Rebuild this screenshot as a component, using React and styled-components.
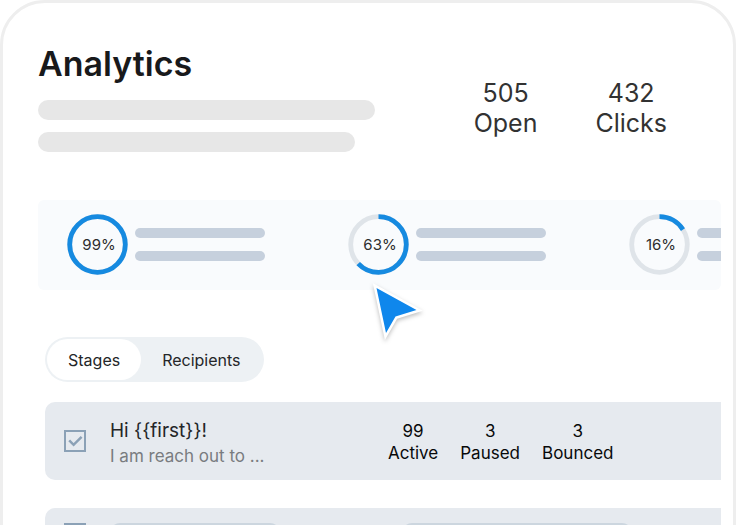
import React from "react";
import styled, { createGlobalStyle } from "styled-components";

const GlobalStyle = createGlobalStyle`
  *, *::before, *::after { box-sizing: border-box; }
  body {
    margin: 0;
    background: #fff;
    font-family: Inter, "Liberation Sans", sans-serif;
    color: #323232;
  }
`;

const Viewport = styled.div`
  height: 100vh;
  overflow: hidden;
  padding-right: 1px;
`;

const Card = styled.main`
  min-height: 120vh;
  padding: 38px 12px 32px 35px;
  border: 3px solid #eeeeee;
  border-radius: 45px;
  background: #fff;
`;

const Header = styled.header`
  display: flex;
  justify-content: space-between;
  align-items: flex-start;
`;

const Intro = styled.div`
  display: flex;
  flex-direction: column;
  gap: 12px;
`;

const Title = styled.h1`
  margin: 0 0 1px;
  font-size: 34px;
  line-height: 46px;
  font-weight: 600;
  color: #18191b;
`;

const Bar = styled.div`
  flex: none;
  width: ${(p) => p.$width}px;
  height: ${(p) => p.$height}px;
  border-radius: 10px;
  background: ${(p) => p.$color};
`;

const Totals = styled.dl`
  display: flex;
  gap: 58px;
  margin: 37px 54px 0 0;
`;

const Total = styled.div`
  display: flex;
  flex-direction: column-reverse;
  text-align: center;
  font-size: 25px;
  line-height: 30px;
`;

const Term = styled.dt`
  margin: 0;
`;

const Value = styled.dd`
  margin: 0;
`;

const Metrics = styled.section`
  display: flex;
  gap: 83px;
  margin-top: 48px;
  padding: 14px 0 15px 29px;
  overflow: hidden;
  border-radius: 6px;
  background: #f9fbfd;
`;

const Metric = styled.div`
  display: flex;
  flex: none;
  align-items: center;
  gap: 7px;
`;

const Gauge = styled.div`
  display: grid;
  place-items: center;
  width: 61px;
  height: 61px;

  > * { grid-area: 1 / 1; }
`;

const Percent = styled.span`
  padding-left: 3px;
  font-size: 15px;
  line-height: 20px;
  color: #2d2d2d;
`;

const BarPair = styled.div`
  display: flex;
  flex-direction: column;
  gap: 13px;
`;

const Tabs = styled.div`
  display: inline-flex;
  margin: 47px 0 0 7px;
  padding: 2px;
  border-radius: 23px;
  background: #edf1f4;
`;

const Tab = styled.button`
  height: 41px;
  padding: 0 21px;
  border: 0;
  border-radius: 21px;
  background: ${(p) => (p.$active ? "#fff" : "transparent")};
  font: 400 16px/20px Inter, "Liberation Sans", sans-serif;
  color: #242628;
`;

const Stages = styled.div`
  display: flex;
  flex-direction: column;
  gap: 28px;
  margin: 20px 0 0 7px;
`;

const Stage = styled.article`
  display: grid;
  grid-template-columns: 22px 279px 1fr;
  align-items: ${(p) => (p.$loading ? "start" : "center")};
  min-height: 78px;
  padding: ${(p) => (p.$loading ? "15px 19px" : "0 19px")};
  border-radius: 10px 0 0 10px;
  background: #e6eaef;
`;

const CheckBox = styled.label`
  display: grid;
  width: 22px;
  height: 22px;

  > * { grid-area: 1 / 1; }
`;

const CheckInput = styled.input`
  appearance: none;
  width: 22px;
  height: 22px;
  margin: 0;
  border: 2px solid #8ba1b6;
  background: transparent;
`;

const CheckMark = styled.svg`
  pointer-events: none;
`;

const Message = styled.div`
  padding: 2px 0 0 24px;
`;

const Subject = styled.h2`
  margin: 0;
  font-size: 19px;
  line-height: 27px;
  font-weight: 400;
  color: #242628;
`;

const Preview = styled.p`
  margin: 0;
  font-size: 17px;
  line-height: 24px;
  color: #797c80;
`;

const Counts = styled.dl`
  display: flex;
  gap: 22px;
  margin: 0;
  padding: 2px 0 0 23px;
`;

const Count = styled.div`
  display: flex;
  flex-direction: column-reverse;
  text-align: center;
  font-size: 17px;
  line-height: 22px;
  color: #08090a;
`;

const LoadingCell = styled.div`
  padding-left: ${(p) => p.$inset}px;
`;

const Pointer = styled.svg`
  position: absolute;
  top: 278px;
  left: 366px;
  overflow: visible;
  pointer-events: none;
  filter: drop-shadow(0 2px 2px rgba(0, 0, 0, 0.25));
`;

const metrics = [99, 63, 16];
const totals = [["505", "Open"], ["432", "Clicks"]];
const counts = [["99", "Active"], ["3", "Paused"], ["3", "Bounced"]];

function Ring({ value }) {
  return (
    <svg width="61" height="61" viewBox="0 0 61 61" fill="none" strokeWidth="4.8" aria-hidden="true">
      <circle cx="30.5" cy="30.5" r="27.8" stroke="#dfe4e9" />
      <circle
        cx="30.5"
        cy="30.5"
        r="27.8"
        stroke="#168ae0"
        pathLength="100"
        strokeDasharray={value === 99 ? "100 0" : `${value} 100`}
        transform="rotate(-90 30.5 30.5)"
      />
    </svg>
  );
}

function Check({ label }) {
  return (
    <CheckBox>
      <CheckInput type="checkbox" defaultChecked aria-label={label} />
      <CheckMark width="22" height="22" viewBox="0 0 22 22" fill="none" aria-hidden="true">
        <path d="M5.2 10.4l4.4 4.4L17.6 6.8" stroke="#8ba1b6" strokeWidth="2.5" />
      </CheckMark>
    </CheckBox>
  );
}

export default function App() {
  const [tab, setTab] = React.useState("Stages");
  return (
    <Viewport>
      <GlobalStyle />
      <Card>
        <Header>
          <Intro>
            <Title>Analytics</Title>
            <Bar $width={337} $height={20} $color="#e7e7e7" />
            <Bar $width={317} $height={20} $color="#e7e7e7" />
          </Intro>
          <Totals>
            {totals.map(([value, label]) => (
              <Total key={label}>
                <Term>{label}</Term>
                <Value>{value}</Value>
              </Total>
            ))}
          </Totals>
        </Header>

        <Metrics>
          {metrics.map((value) => (
            <Metric key={value}>
              <Gauge>
                <Ring value={value} />
                <Percent>{value}%</Percent>
              </Gauge>
              <BarPair>
                <Bar $width={130} $height={10} $color="#c6d0dd" />
                <Bar $width={130} $height={10} $color="#c6d0dd" />
              </BarPair>
            </Metric>
          ))}
        </Metrics>

        <Tabs role="tablist">
          {["Stages", "Recipients"].map((name) => (
            <Tab
              key={name}
              type="button"
              role="tab"
              aria-selected={tab === name}
              $active={tab === name}
              onClick={() => setTab(name)}
            >
              {name}
            </Tab>
          ))}
        </Tabs>

        <Stages>
          <Stage>
            <Check label="Select stage" />
            <Message>
              <Subject>{"Hi {{first}}!"}</Subject>
              <Preview>I am reach out to ...</Preview>
            </Message>
            <Counts>
              {counts.map(([value, label]) => (
                <Count key={label}>
                  <Term>{label}</Term>
                  <Value>{value}</Value>
                </Count>
              ))}
            </Counts>
          </Stage>
          <Stage $loading>
            <Check label="Select next stage" />
            <LoadingCell $inset={24}>
              <Bar $width={170} $height={20} $color="#ccd6df" />
            </LoadingCell>
            <LoadingCell $inset={37}>
              <Bar $width={230} $height={20} $color="#ccd6df" />
            </LoadingCell>
          </Stage>
        </Stages>
      </Card>
      <Pointer width="60" height="64" viewBox="0 0 60 64" aria-hidden="true">
        <path
          d="M10.5 10L50.5 32L29.5 38.6L20 55Z"
          fill="#0f87ec"
          stroke="#fff"
          strokeWidth="5"
          strokeLinejoin="miter"
          paintOrder="stroke"
        />
      </Pointer>
    </Viewport>
  );
}
